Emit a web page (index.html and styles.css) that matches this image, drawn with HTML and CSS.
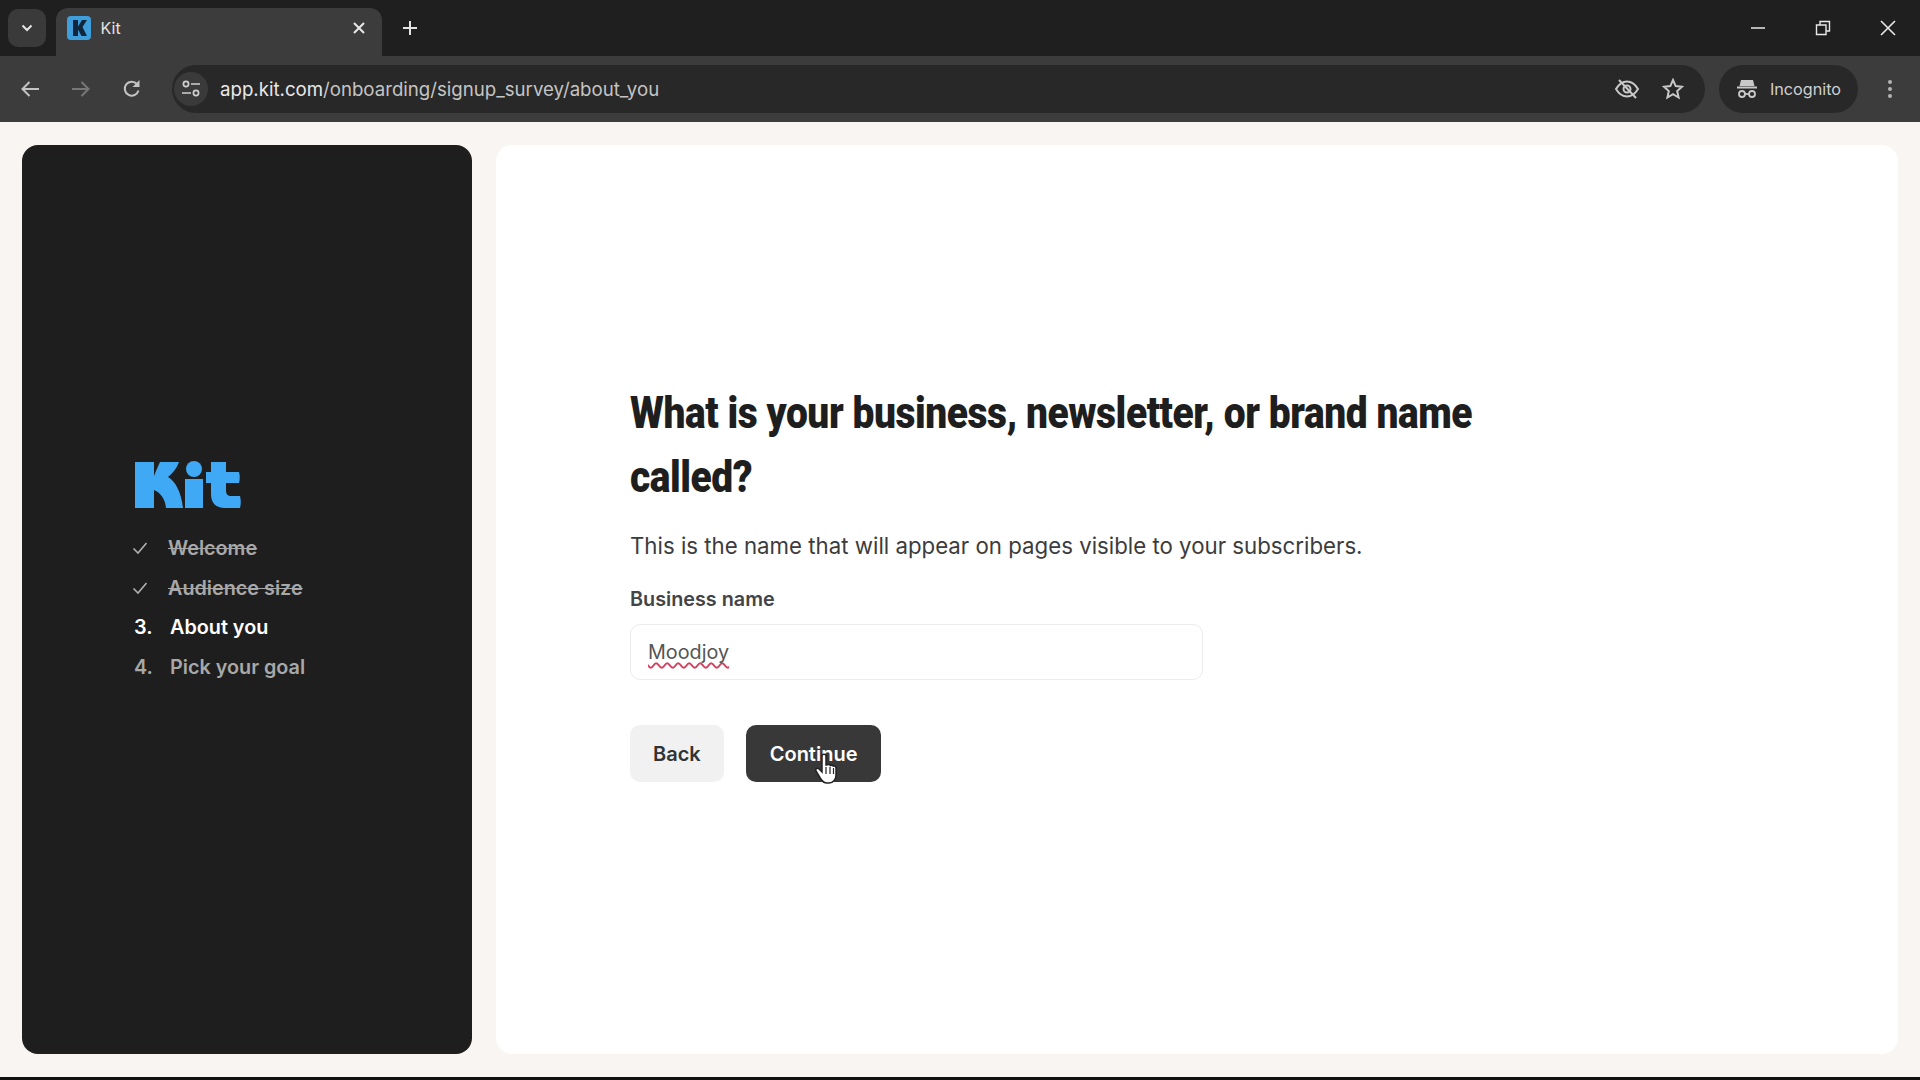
FILE: index.html
```html
<!DOCTYPE html>
<html>

<head>
    <meta charset="UTF-8">
    <meta name="viewport" content="width=device-width, initial-scale=1.0">
    <title>Kit</title>
    <link rel="stylesheet" href="styles.css">
</head>

<body>
    <div class="tabstrip">
        <button class="tabSearch">
            <svg width="12" height="8" viewBox="0 0 12 8"><path d="M1.5 1.5 6 6l4.500-4.500" fill="none" stroke="#e6e6e6" stroke-width="2"/></svg>
        </button>
        <div class="tab">
            <svg class="favicon" width="24" height="24" viewBox="0 0 24 24">
                <rect width="24" height="24" rx="4" fill="#3f9fdc"/>
                <path d="M6 4h5v6.500L15 4h5l-4.500 7L20 20h-5.500L11 13.500V20H6z" fill="#10263c"/>
            </svg>
            <span class="tabTitle">Kit</span>
            <svg class="tabClose" width="14" height="14" viewBox="0 0 14 14"><path d="M2 2l10 10M12 2 2 12" stroke="#e8e8e8" stroke-width="2"/></svg>
        </div>
        <svg class="newTab" width="16" height="16" viewBox="0 0 16 16"><path d="M8 1v14M1 8h14" stroke="#e4e4e4" stroke-width="2"/></svg>
        <div class="windowButtons">
            <svg width="16" height="16" viewBox="0 0 16 16"><path d="M1 8h14" stroke="#e8e8e8" stroke-width="1.500"/></svg>
            <svg width="16" height="16" viewBox="0 0 16 16"><path d="M1.500 5h9.500v9.500H1.500zM5 5V1.500h9.500V11H11" fill="none" stroke="#e8e8e8" stroke-width="1.400"/></svg>
            <svg width="16" height="16" viewBox="0 0 16 16"><path d="M1 1l14 14M15 1 1 15" stroke="#e8e8e8" stroke-width="1.600"/></svg>
        </div>
    </div>

    <div class="toolbar">
        <svg class="navIcon" width="20" height="18" viewBox="0 0 20 18"><path d="M19 9H3M9.500 2 2.500 9l7 7" fill="none" stroke="#c4c4c4" stroke-width="2"/></svg>
        <svg class="navIcon" width="20" height="18" viewBox="0 0 20 18"><path d="M1 9h16M10.500 2l7 7-7 7" fill="none" stroke="#777" stroke-width="2"/></svg>
        <svg class="navIcon" width="20" height="20" viewBox="0 0 20 20"><path d="M16.500 11.500A7 7 0 1 1 15 5" fill="none" stroke="#c4c4c4" stroke-width="2"/><path d="M17.500 1v7h-7z" fill="#c4c4c4"/></svg>
        <div class="omnibox">
            <span class="siteInfo">
                <svg width="20" height="18" viewBox="0 0 20 18"><g fill="none" stroke="#cfcfcf" stroke-width="1.700"><circle cx="5" cy="4" r="2.600"/><path d="M10 4h9M1 13h9"/><circle cx="15" cy="13" r="2.600"/></g></svg>
            </span>
            <span class="url">app.kit.com<span class="urlPath">/onboarding/signup_survey/about_you</span></span>
            <svg class="omniIcon" width="26" height="22" viewBox="0 0 26 22"><g fill="none" stroke="#c8c8c8" stroke-width="2"><path d="M2 11c3-5 7-7.500 11-7.500S21 6 24 11c-3 5-7 7.500-11 7.500S5 16 2 11z"/><circle cx="13" cy="11" r="3.500"/><path d="M5 2l17 18"/></g></svg>
            <svg class="omniIcon star" width="22" height="22" viewBox="0 0 22 22"><path d="M11 2l2.700 6.100 6.300.6-4.800 4.300 1.400 6.500L11 16.200l-5.600 3.300L6.800 13 2 8.700l6.300-.6z" fill="none" stroke="#c8c8c8" stroke-width="2"/></svg>
        </div>
        <div class="incognito">
            <svg width="22" height="20" viewBox="0 0 22 20"><g fill="#c8c8c8"><path d="M5 1h12l1.500 6h-15z"/><rect x="1" y="7.500" width="20" height="2"/></g><g fill="none" stroke="#c8c8c8" stroke-width="1.800"><circle cx="6" cy="15" r="3"/><circle cx="16" cy="15" r="3"/><path d="M9 15h4"/></g></svg>
            <span>Incognito</span>
        </div>
        <svg class="menuIcon" width="6" height="20" viewBox="0 0 6 20"><g fill="#b4b4b4"><circle cx="3" cy="3" r="2"/><circle cx="3" cy="10" r="2"/><circle cx="3" cy="17" r="2"/></g></svg>
    </div>

    <div class="page">
        <aside class="sidebar">
            <svg class="logo" width="106" height="48" viewBox="0 0 106 48">
                <g fill="#3fa9f5">
                    <path d="M0 1h19v14c2-5 4-10 6-14h19c-2 6-6 11-11 15 7 4 13 14 15 31H31c-1-9-5-15-12-18v18H0z"/>
                    <circle cx="59" cy="8" r="8"/>
                    <rect x="50" y="18" width="18" height="29"/>
                    <path d="M76 1h15v10h13c1 3 1 8 0 11H91v8c0 3 2 5 5 5h9c1 4 1 8 0 12H90c-9 0-14-5-14-14V22h-5V11h5z"/>
                </g>
            </svg>
            <ol class="steps">
                <li class="step done">
                    <svg width="16" height="14" viewBox="0 0 16 14"><path d="M1.500 7.500 6 12l8.500-10" fill="none" stroke="#b0b0b0" stroke-width="1.600"/></svg>
                    <span class="stepName">Welcome</span>
                </li>
                <li class="step done">
                    <svg width="16" height="14" viewBox="0 0 16 14"><path d="M1.500 7.500 6 12l8.500-10" fill="none" stroke="#b0b0b0" stroke-width="1.600"/></svg>
                    <span class="stepName">Audience size</span>
                </li>
                <li class="step current"><span class="stepNum">3.</span><span class="stepName">About you</span></li>
                <li class="step"><span class="stepNum">4.</span><span class="stepName">Pick your goal</span></li>
            </ol>
        </aside>

        <main class="panel">
            <h1>What is your business, newsletter, or brand name<br>called?</h1>
            <p class="hint">This is the name that will appear on pages visible to your subscribers.</p>
            <label class="fieldLabel">Business name</label>
            <div class="field"><span class="misspelled">Moodjoy</span></div>
            <div class="actions">
                <button class="btn btnBack">Back</button>
                <button class="btn btnContinue">Continue
                    <svg class="cursor" width="24" height="32" viewBox="0 0 24 32"><path d="M7 3c0-2.500 4-2.500 4 0v9l2-.5c1.500-.2 2 .3 2.500 1 1.200-.6 2.300-.3 2.800.6 1.400-.5 2.700.3 2.700 1.900V22c0 4-2.500 8-7 8h-2c-3.500 0-5-2-6.500-4.500L1 18c-1-2 1.500-3.500 3-2l3 3z" fill="#fff" stroke="#222" stroke-width="1.500"/><path d="M11 14v7M15 14v7M18.500 15v6" stroke="#222" stroke-width="1.200"/></svg>
                </button>
            </div>
        </main>
    </div>
    <div class="bottomEdge"></div>
</body>

</html>
```
FILE: styles.css
```css
html, body {
    margin: 0;
    height: 100%;
}

body {
    display: flex;
    flex-direction: column;
    height: 1080px;
    overflow: hidden;
    background-color: #f8f5f2;
    font-family: Inter, "Liberation Sans", sans-serif;
}

/* browser chrome */
.tabstrip {
    display: flex;
    align-items: flex-end;
    height: 56px;
    flex: none;
    background-color: #1f1f1f;
    box-sizing: border-box;
}

.tabSearch {
    display: flex;
    align-items: center;
    justify-content: center;
    width: 38px;
    height: 38px;
    margin: 0 10px 9px 8px;
    padding: 0;
    border: none;
    border-radius: 10px;
    background-color: #3a3a3a;
}

.tab {
    display: flex;
    align-items: center;
    width: 326px;
    height: 48px;
    padding: 0 16px 8px 10.500px;
    box-sizing: border-box;
    border-radius: 12px 12px 0 0;
    background-color: #3c3c3c;
}

.tabTitle {
    flex: 1;
    margin-left: 10px;
    font-size: 16px;
    color: #e4e4e4;
}

.newTab {
    margin: 0 0 20px 20px;
}

.windowButtons {
    display: flex;
    gap: 49px;
    margin-left: auto;
    padding: 0 24px 20px 0;
}

.toolbar {
    display: flex;
    align-items: center;
    height: 66px;
    flex: none;
    box-sizing: border-box;
    padding: 0 24px 0 20px;
    background-color: #3c3c3c;
}

.navIcon {
    margin-right: 31px;
}

.omnibox {
    display: flex;
    align-items: center;
    flex: 1;
    height: 48px;
    margin-left: -1px;
    padding-left: 2px;
    padding-right: 21px;
    border-radius: 24px;
    background-color: #282828;
}

.siteInfo {
    display: flex;
    align-items: center;
    justify-content: center;
    width: 34px;
    height: 34px;
    border-radius: 17px;
    background-color: #3a3a3a;
}

.url {
    flex: 1;
    margin-left: 12px;
    font-size: 18.650px;
    color: #e8e8e8;
}

.urlPath {
    color: #c4c4c4;
}

.omniIcon {
    margin-left: 21px;
}

.star {
    margin-left: 22px;
}

.incognito {
    display: flex;
    align-items: center;
    gap: 12px;
    height: 48px;
    margin-left: 14px;
    padding: 0 16.500px;
    border-radius: 24px;
    background-color: #282828;
    font-size: 16.200px;
    color: #d0d0d0;
}

.menuIcon {
    margin-left: 29.500px;
    margin-right: 3px;
}

/* page */
.page {
    display: flex;
    flex: 1;
    gap: 24px;
    padding: 23px 22px 23px 22px;
    min-height: 0;
}

.sidebar {
    display: flex;
    flex-direction: column;
    justify-content: center;
    width: 450px;
    flex: none;
    box-sizing: border-box;
    padding: 0 0 52px 112px;
    border-radius: 16px;
    background-color: #1e1e1e;
}

.logo {
    display: block;
    margin-left: 1px;
}

.steps {
    list-style: none;
    margin: 20px 0 0 0;
    padding: 0;
}

.step {
    display: flex;
    align-items: center;
    height: 39.500px;
    font-size: 19.800px;
    font-weight: 600;
    color: #a8a8a8;
}

.step svg {
    width: 16px;
    margin-left: -2px;
    margin-right: 20px;
}

.stepNum {
    width: 36px;
}

.done .stepName {
    text-decoration: line-through;
}

.current {
    color: #fff;
}

.panel {
    flex: 1;
    display: flex;
    flex-direction: column;
    justify-content: center;
    box-sizing: border-box;
    padding: 0 0 36px 134px;
    border-radius: 16px;
    background-color: #fff;
}

/* no condensed face is installed, so Roboto Black is squeezed sideways */
h1 {
    width: 1020px;
    margin: 0;
    font-family: Roboto, sans-serif;
    font-size: 45px;
    font-weight: 900;
    line-height: 64px;
    letter-spacing: -0.5px;
    color: #1e1e1e;
    transform: scaleX(.865);
    transform-origin: left center;
}

.hint {
    margin: 21.500px 0 0 0;
    font-size: 22.250px;
    line-height: 32px;
    color: #3c3c3c;
}

.fieldLabel {
    display: block;
    margin-top: 24.600px;
    font-size: 19.800px;
    font-weight: 600;
    line-height: 24px;
    color: #444;
}

.field {
    display: flex;
    align-items: center;
    width: 573px;
    height: 56px;
    margin-top: 13px;
    padding-left: 17px;
    box-sizing: border-box;
    border: 1px solid #ececec;
    border-radius: 10px;
    font-size: 19.800px;
    color: #555;
}

.misspelled {
    text-decoration: underline wavy #d0425f;
    text-decoration-thickness: 1.500px;
    text-decoration-skip-ink: none;
    text-underline-offset: 3px;
}

.actions {
    display: flex;
    gap: 22px;
    margin-top: 45px;
}

.btn {
    position: relative;
    height: 57px;
    padding: 0 23px;
    border: none;
    border-radius: 10px;
    font-family: Inter, "Liberation Sans", sans-serif;
    font-size: 20px;
    font-weight: 600;
}

.btnBack {
    background-color: #f1f1f1;
    color: #333;
}

.btnContinue {
    padding: 0 24px;
    background-color: #383838;
    color: #fff;
}

.cursor {
    position: absolute;
    left: 69px;
    top: 28px;
}

.bottomEdge {
    height: 3px;
    flex: none;
    background-color: #111;
}
```
